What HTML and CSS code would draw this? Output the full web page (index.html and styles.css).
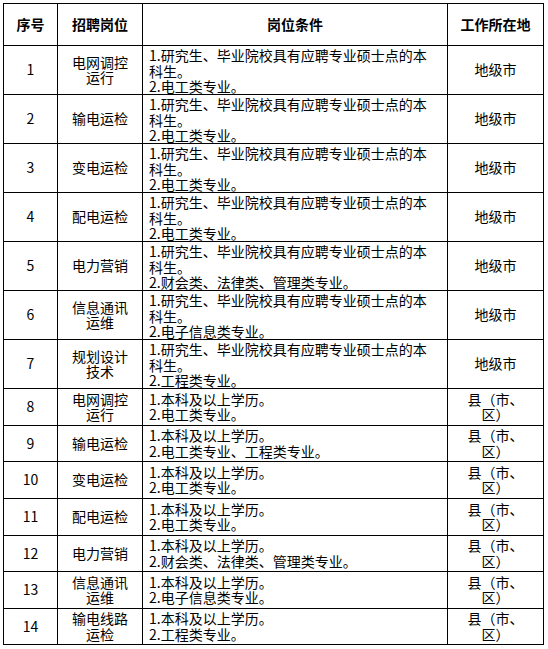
FILE: index.html
```html
<!DOCTYPE html>
<html lang="zh">
<head>
<meta charset="utf-8">
<title>招聘岗位</title>
<link rel="stylesheet" href="styles.css">
</head>
<body>
<div class="table">
  <div class="cell head">序号</div>
  <div class="cell head">招聘岗位</div>
  <div class="cell head">岗位条件</div>
  <div class="cell head">工作所在地</div>

  <div class="cell">1</div>
  <div class="cell">电网调控<br>运行</div>
  <div class="cell cond tall">1.研究生、毕业院校具有应聘专业硕士点的本<br>科生。<br>2.电工类专业。</div>
  <div class="cell">地级市</div>

  <div class="cell">2</div>
  <div class="cell">输电运检</div>
  <div class="cell cond tall">1.研究生、毕业院校具有应聘专业硕士点的本<br>科生。<br>2.电工类专业。</div>
  <div class="cell">地级市</div>

  <div class="cell">3</div>
  <div class="cell">变电运检</div>
  <div class="cell cond tall">1.研究生、毕业院校具有应聘专业硕士点的本<br>科生。<br>2.电工类专业。</div>
  <div class="cell">地级市</div>

  <div class="cell">4</div>
  <div class="cell">配电运检</div>
  <div class="cell cond tall">1.研究生、毕业院校具有应聘专业硕士点的本<br>科生。<br>2.电工类专业。</div>
  <div class="cell">地级市</div>

  <div class="cell">5</div>
  <div class="cell">电力营销</div>
  <div class="cell cond tall">1.研究生、毕业院校具有应聘专业硕士点的本<br>科生。<br>2.财会类、法律类、管理类专业。</div>
  <div class="cell">地级市</div>

  <div class="cell">6</div>
  <div class="cell">信息通讯<br>运维</div>
  <div class="cell cond tall">1.研究生、毕业院校具有应聘专业硕士点的本<br>科生。<br>2.电子信息类专业。</div>
  <div class="cell">地级市</div>

  <div class="cell">7</div>
  <div class="cell">规划设计<br>技术</div>
  <div class="cell cond tall">1.研究生、毕业院校具有应聘专业硕士点的本<br>科生。<br>2.工程类专业。</div>
  <div class="cell">地级市</div>

  <div class="cell">8</div>
  <div class="cell">电网调控<br>运行</div>
  <div class="cell cond">1.本科及以上学历。<br>2.电工类专业。</div>
  <div class="cell">县（市、<br>区）</div>

  <div class="cell">9</div>
  <div class="cell">输电运检</div>
  <div class="cell cond">1.本科及以上学历。<br>2.电工类专业、工程类专业。</div>
  <div class="cell">县（市、<br>区）</div>

  <div class="cell">10</div>
  <div class="cell">变电运检</div>
  <div class="cell cond">1.本科及以上学历。<br>2.电工类专业。</div>
  <div class="cell">县（市、<br>区）</div>

  <div class="cell">11</div>
  <div class="cell">配电运检</div>
  <div class="cell cond">1.本科及以上学历。<br>2.电工类专业。</div>
  <div class="cell">县（市、<br>区）</div>

  <div class="cell">12</div>
  <div class="cell">电力营销</div>
  <div class="cell cond">1.本科及以上学历。<br>2.财会类、法律类、管理类专业。</div>
  <div class="cell">县（市、<br>区）</div>

  <div class="cell">13</div>
  <div class="cell">信息通讯<br>运维</div>
  <div class="cell cond">1.本科及以上学历。<br>2.电子信息类专业。</div>
  <div class="cell">县（市、<br>区）</div>

  <div class="cell">14</div>
  <div class="cell">输电线路<br>运检</div>
  <div class="cell cond">1.本科及以上学历。<br>2.工程类专业。</div>
  <div class="cell">县（市、<br>区）</div>
</div>
</body>
</html>
```

FILE: styles.css
```css
html, body {
  margin: 0;
  padding: 0;
  background: #ffffff;
}

body {
  font-family: "Noto Sans CJK SC", "Noto Sans", sans-serif;
  font-size: 14px;
  color: #000000;
}

.table {
  display: grid;
  grid-template-columns: 54px 85px 305px 96px;
  grid-template-rows: 42px repeat(7, 49px) 37px 36px 37px 37px 36px 37px 36px;
  width: max-content;
  margin: 3px 0 0 3px;
  border-left: 1px solid #000;
  border-top: 1px solid #000;
}

.cell {
  box-sizing: border-box;
  border-right: 1px solid #000;
  border-bottom: 1px solid #000;
  display: flex;
  align-items: center;
  justify-content: center;
  text-align: center;
  line-height: 15.5px;
  white-space: nowrap;
  overflow: visible;
}

.head {
  font-weight: bold;
}

.cond {
  justify-content: flex-start;
  text-align: left;
  padding-left: 6px;
}

.cond.tall {
  align-items: flex-start;
  padding-top: 2px;
}
```
